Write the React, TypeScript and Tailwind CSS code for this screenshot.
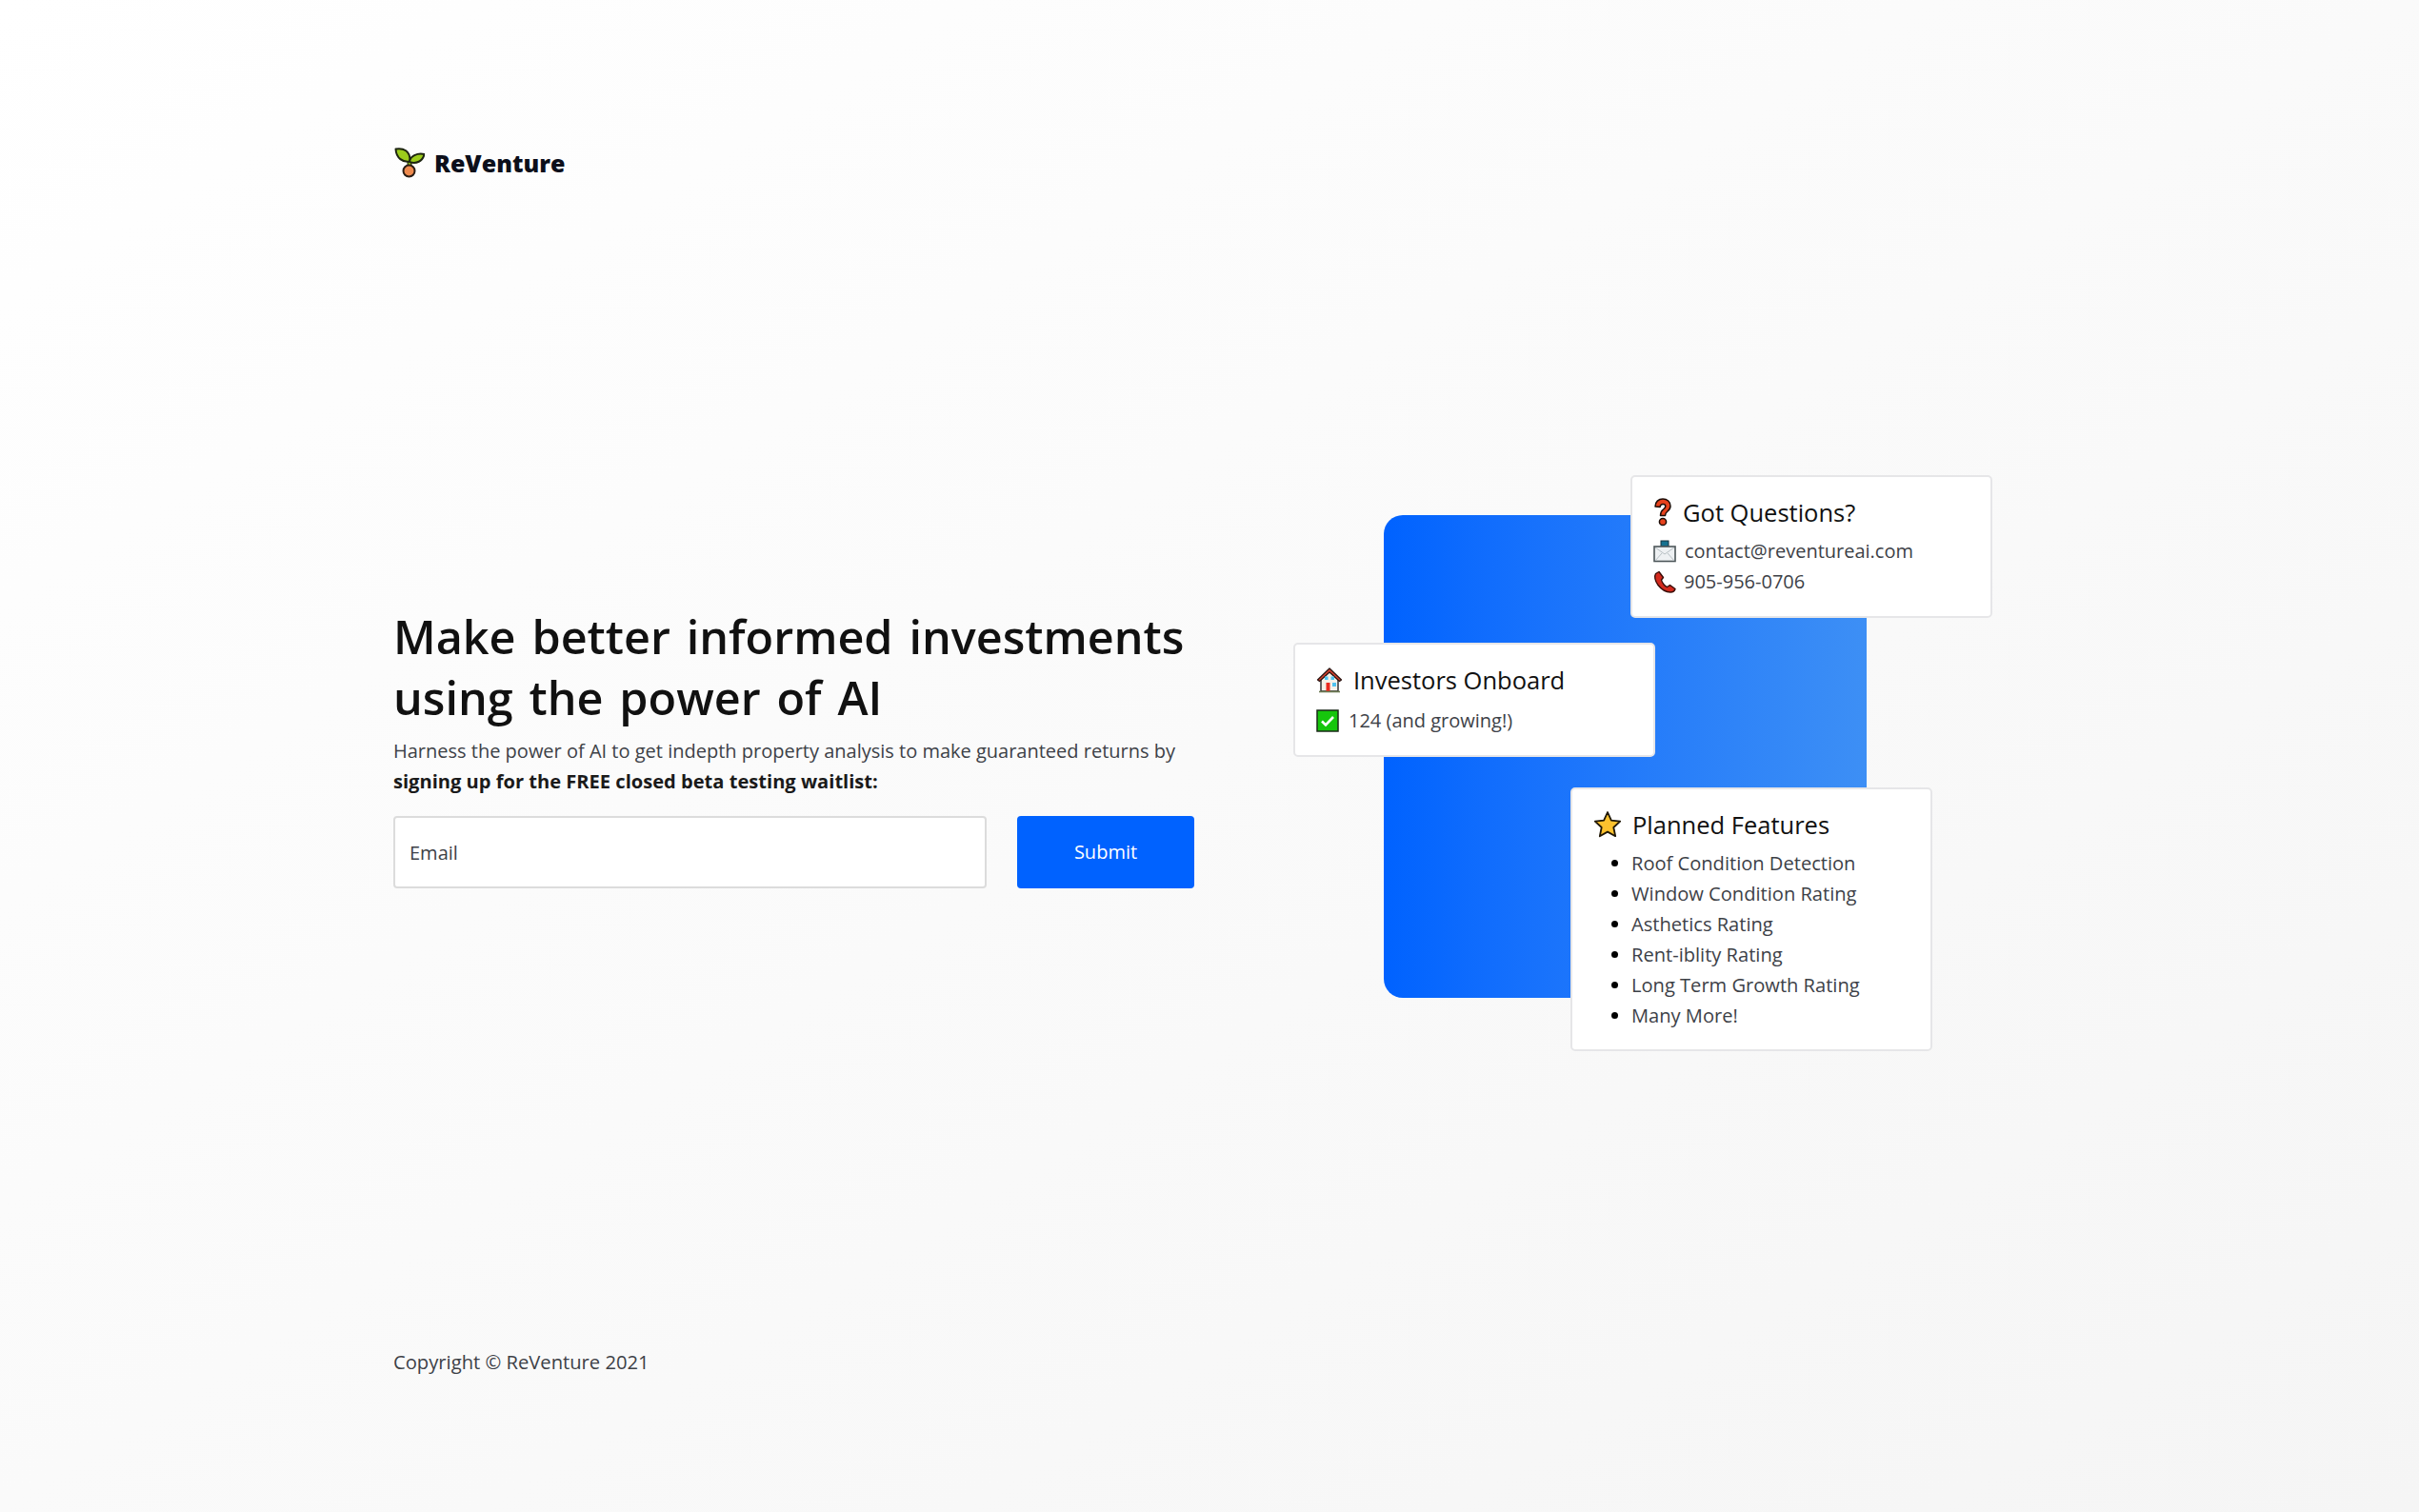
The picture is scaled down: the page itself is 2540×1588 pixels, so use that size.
const font = { fontFamily: '"Open Sans", "Noto Sans", sans-serif' }

function Sprout() {
  return (
    <svg viewBox="0 0 32 32" className="ml-[1px] h-[32px] w-[32px]">
      <path d="M16 12v12" stroke="#2f3a12" strokeWidth="5" fill="none" />
      <path d="M16 12v12" stroke="#8fc31f" strokeWidth="2.4" fill="none" />
      <path d="M1.500 1.500c8-1.500 15.500 2 15 13C9 16 2 11 1.500 1.500Z" fill="#9ccc1c" stroke="#1d2410" strokeWidth="2" strokeLinejoin="round" />
      <path d="M16 15c.5-6 8-9.500 15.500-8-1.500 7.500-8.500 10.500-15.500 8Z" fill="#9ccc1c" stroke="#1d2410" strokeWidth="2" strokeLinejoin="round" />
      <circle cx="15.500" cy="24.500" r="6" fill="#ee8a4e" stroke="#2a1d14" strokeWidth="2" />
    </svg>
  )
}

function Question() {
  return (
    <svg viewBox="0 0 20 30" className="h-[30px] w-[20px]">
      <path d="M2 9C2 4 5.500 1 10 1s8 3 8 7.500c0 3-1.500 4.500-3.500 6-1.500 1.200-2 2-2 4h-5c0-3.500 1-5 3-6.500 1.500-1.200 2.300-2 2.300-3.300 0-1.300-1-2.200-2.700-2.200-1.800 0-2.800 1-3 3Z" fill="#e8421c" stroke="#1c0d08" strokeWidth="1.500" strokeLinejoin="round" />
      <circle cx="10" cy="25" r="3.600" fill="#e8421c" stroke="#1c0d08" strokeWidth="1.500" />
    </svg>
  )
}

function Mail() {
  return (
    <svg viewBox="0 0 24 24" className="h-[24px] w-[24px]">
      <rect x="8" y="1" width="8" height="6" fill="#16718f" stroke="#12303c" strokeWidth="1" />
      <rect x="1" y="7" width="22" height="15.500" fill="#eef1f3" stroke="#4b5558" strokeWidth="1.600" />
      <path d="M2 8l10 7 10-7M2 22l7-8M22 22l-7-8" fill="none" stroke="#b8c0c4" strokeWidth="1" />
    </svg>
  )
}

function Phone() {
  return (
    <svg viewBox="0 0 24 24" className="h-[24px] w-[24px]">
      <path d="M6 1.500 2.500 3.500C1 6 1.500 11 5 15.500s8 7.500 13 7.500c2.500 0 4.500-1.500 5-3.500l-5.500-4-3 2c-2-.5-5.500-4.500-6-7.500l2-2.500Z" fill="#d32a1e" stroke="#3a0d08" strokeWidth="1.400" strokeLinejoin="round" />
    </svg>
  )
}

function House() {
  return (
    <svg viewBox="0 0 28 28" className="h-[28px] w-[28px]">
      <path d="M5 12v14h18V12L14 4Z" fill="#f4f1e8" stroke="#333" strokeWidth="1.500" />
      <path d="M1.500 14 14 2l12.500 12-2 1.500L14 6 3.500 15.500Z" fill="#d9412f" stroke="#2a1512" strokeWidth="1.300" strokeLinejoin="round" />
      <rect x="10.500" y="17" width="4" height="9" fill="#ea2b1f" />
      <rect x="9" y="10.500" width="3.500" height="3.500" fill="#4fc3f0" />
      <rect x="15.500" y="10.500" width="3.500" height="3.500" fill="#4fc3f0" />
      <rect x="17" y="17" width="4" height="4" fill="#4fc3f0" />
      <path d="M3 26.500h22" stroke="#6b7a52" strokeWidth="1.600" />
    </svg>
  )
}

function Check() {
  return (
    <svg viewBox="0 0 24 24" className="h-[24px] w-[24px]">
      <rect x="1" y="1" width="22" height="22" fill="#16c60c" stroke="#1a2a18" strokeWidth="1.500" />
      <path d="M6 12.500l4 4 8-8.500" fill="none" stroke="#fff" strokeWidth="2.600" />
    </svg>
  )
}

function Star() {
  return (
    <svg viewBox="0 0 30 30" className="h-[30px] w-[30px]">
      <path d="M15 2l3.900 8.600 9.300 1.100-6.900 6.300 1.900 9.200L15 22.600l-8.200 4.600 1.900-9.200-6.900-6.300 9.300-1.100Z" fill="#fcc12e" stroke="#1f1706" strokeWidth="1.800" strokeLinejoin="round" />
    </svg>
  )
}

const planned = [
  'Roof Condition Detection',
  'Window Condition Rating',
  'Asthetics Rating',
  'Rent-iblity Rating',
  'Long Term Growth Rating',
  'Many More!',
]

const cardClass =
  'absolute w-[380px] rounded-[5px] border-2 border-[#e6e6e8] bg-white px-[22px] pt-[21px] text-[20px] leading-[32px] text-[#3d4147]'
const titleClass = 'text-[25.5px] font-medium leading-[32px] text-[#111]'

export default function App() {
  return (
    <div
      style={font}
      className="flex min-h-[1588px] flex-col bg-gradient-to-br from-white to-[#f5f5f5] pl-[413px] text-[#3d4147]"
    >
      <header className="flex h-[342px] items-start gap-[10px] pt-[155px]">
        <Sprout />
        <span className="text-[25px] font-extrabold leading-[32px] text-[#0c0f1a]">ReVenture</span>
      </header>

      <main className="flex items-start">
        <section className="w-[841px] pt-[294px]">
          <h1 className="whitespace-nowrap text-[48.5px] font-semibold leading-[64px] text-[#111] [word-spacing:4.3px]">
            Make better informed investments
            <br />
            using the power of AI
          </h1>
          <p className="mt-[9px] whitespace-nowrap text-[20px] leading-[32px]">
            Harness the power of AI to get indepth property analysis to make guaranteed returns by
            <br />
            <b className="text-[20.1px] font-bold text-[#1a1a1a]">signing up for the FREE closed beta testing waitlist:</b>
          </p>
          <form className="mt-[20px] flex gap-[32px]">
            <input
              placeholder="Email"
              className="h-[76px] w-[623px] rounded-[4px] border-2 border-[#dcdcdc] bg-white px-[15px] text-[20px] placeholder:text-[#3d4147]"
            />
            <button type="button" className="h-[76px] w-[186px] rounded-[4px] bg-[#0062ff] text-[20px] font-medium text-white">
              Submit
            </button>
          </form>
        </section>

        <div className="relative ml-[199px] mt-[199px] h-[507px] w-[507px] rounded-[20px] bg-gradient-to-r from-[#0062ff] to-[#3d8ff5]">
          <div className={`${cardClass} left-[259px] top-[-42px] h-[150px]`}>
            <div className={`flex items-center gap-[11px] ${titleClass}`}>
              <Question /> Got Questions?
            </div>
            <div className="mt-[9px] flex items-center gap-[9px]">
              <Mail /> contact@reventureai.com
            </div>
            <div className="flex items-center gap-[8px]">
              <Phone /> 905-956-0706
            </div>
          </div>

          <div className={`${cardClass} left-[-95px] top-[134px] h-[120px]`}>
            <div className={`flex items-center gap-[11px] ${titleClass}`}>
              <House /> Investors Onboard
            </div>
            <div className="mt-[11px] flex items-center gap-[10px]">
              <Check /> 124 (and growing!)
            </div>
          </div>

          <div className={`${cardClass} left-[196px] top-[286px] h-[277px]`}>
            <div className={`flex items-center gap-[11px] ${titleClass}`}>
              <Star /> Planned Features
            </div>
            <ul className="mt-[9px] list-disc pl-[40px] text-[20.1px] marker:text-black">
              {planned.map((item) => (
                <li key={item}>{item}</li>
              ))}
            </ul>
          </div>
        </div>
      </main>

      <footer className="mt-[366px] text-[20.2px] leading-[32px]">Copyright © ReVenture 2021</footer>
    </div>
  )
}
